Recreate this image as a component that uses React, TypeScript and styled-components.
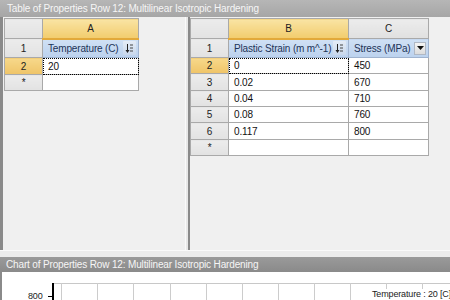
import styled, { createGlobalStyle } from 'styled-components';

const GlobalStyle = createGlobalStyle`
  html, body {
    margin: 0;
    padding: 0;
    background: #f0f0f0;
  }
  body {
    font-family: "Liberation Sans", Tahoma, Arial, sans-serif;
    font-size: 10px;
    letter-spacing: -0.15px;
    color: #1a1a1a;
  }
`;

const Window = styled.div`
  width: 450px;
  height: 300px;
  overflow: hidden;
  background: #f0f0f0;
  display: flex;
  flex-direction: column;
`;

const TitleBar = styled.div<{ $dark?: boolean }>`
  height: ${({ $dark }) => ($dark ? '15px' : '17px')};
  flex: none;
  display: flex;
  align-items: center;
  padding-left: ${({ $dark }) => ($dark ? '6px' : '7px')};
  background: ${({ $dark }) =>
    $dark
      ? 'linear-gradient(#9a9a9a, #8a8a8a)'
      : 'linear-gradient(#b6b6b6, #a6a6a6)'};
  color: #f6f6f6;
  font-size: 10px;
  white-space: nowrap;
  overflow: hidden;
`;

const TablesArea = styled.div`
  height: 233px;
  flex: none;
  display: flex;
`;

const Pane = styled.div<{ $left?: boolean }>`
  width: ${({ $left }) => ($left ? '185px' : 'auto')};
  flex: ${({ $left }) => ($left ? 'none' : '1')};
  border-left: ${({ $left }) => ($left ? '3px solid #8a8a8a' : 'none')};
  padding: 1px 0 0 ${({ $left }) => ($left ? '1px' : '0')};
  box-sizing: border-box;
  background: #f0f0f0;
`;

const VSplitter = styled.div`
  width: 5px;
  flex: none;
  box-sizing: border-box;
  border-left: 1px solid #fbfbfb;
  border-right: 2px solid #8a8a8a;
  background: #e8e8e8;
`;

const HSplitter = styled.div`
  height: 7px;
  flex: none;
  box-sizing: border-box;
  border-top: 1px solid #fafafa;
  background: #ececec;
`;

const Grid = styled.table`
  border-collapse: collapse;
  table-layout: fixed;
  font-size: 10px;
  white-space: nowrap;
`;

const Row = styled.tr<{ $h: number }>`
  height: ${({ $h }) => $h}px;
`;

const RowHead = styled.td<{ $sel?: boolean }>`
  border: 1px solid #a9a9a9;
  background: ${({ $sel }) =>
    $sel ? 'linear-gradient(#f7d88a, #efc468)' : 'linear-gradient(#ececec, #e2e2e2)'};
  text-align: center;
  padding: 0;
  color: #222;
`;

const ColHead = styled.td<{ $sel?: boolean }>`
  border: 1px solid #a9a9a9;
  background: ${({ $sel }) =>
    $sel ? 'linear-gradient(#f9e4a4, #f2cc6c)' : 'linear-gradient(#ececec, #e0e0e0)'};
  border-bottom: ${({ $sel }) => ($sel ? '2px solid #e2a93a' : '1px solid #a9a9a9')};
  text-align: center;
  padding: 0;
  color: #222;
`;

const NameCell = styled.td`
  border: 1px solid #9fb3cf;
  background: linear-gradient(#cfe0f4, #bcd2ee);
  padding: 0 2px 0 5px;
  color: #1d3458;
`;

const NameInner = styled.div`
  display: flex;
  align-items: center;
  justify-content: space-between;
`;

const IconButton = styled.span`
  width: 13px;
  height: 14px;
  flex: none;
  display: flex;
  align-items: center;
  justify-content: center;
  background: linear-gradient(#e4ecf6, #c9d8ec);
  border-radius: 1px;
`;

const DropButton = styled.span`
  width: 12px;
  height: 13px;
  flex: none;
  display: flex;
  align-items: center;
  justify-content: center;
  background: linear-gradient(#f4f4f4, #dcdcdc);
  border: 1px solid #b0b8c4;
  box-sizing: border-box;
`;

const Cell = styled.td<{ $focus?: boolean }>`
  border: 1px solid #a9a9a9;
  background: #fff;
  padding: 0 0 0 5px;
  color: #111;
  outline: ${({ $focus }) => ($focus ? '1px dotted #000' : 'none')};
  outline-offset: -1px;
`;

const ChartArea = styled.div`
  flex: 1;
  background: #fff;
  border-left: 2px solid #8a8a8a;
`;

const SortIcon = () => (
  <svg width="9" height="11" viewBox="0 0 9 11">
    <path d="M2.5 1v8" stroke="#222" strokeWidth="1" />
    <path d="M0.5 7l2 3 2-3z" fill="#222" />
    <path d="M5 2h3M5 5h3M5 8h3" stroke="#444" strokeWidth="1" />
  </svg>
);

const DropIcon = () => (
  <svg width="7" height="4" viewBox="0 0 7 4">
    <path d="M0 0h7L3.5 4z" fill="#111" />
  </svg>
);

const gridX = [61, 97, 133, 170, 206, 242, 278, 314, 350, 386, 422];

const Chart = () => (
  <svg width="448" height="28" viewBox="0 0 448 28" style={{ display: 'block' }}>
    <line x1="50" y1="11.5" x2="448" y2="11.5" stroke="#c8c8c8" />
    {gridX.map((x) => (
      <line key={x} x1={x - 1.5} y1="11" x2={x - 1.5} y2="28" stroke="#cccccc" />
    ))}
    <rect x="50" y="11" width="2" height="17" fill="#000" />
    <line x1="46" y1="24.5" x2="50" y2="24.5" stroke="#000" />
    <text x="26" y="27" fontSize="9" fontFamily="Liberation Sans, Arial, sans-serif" fill="#222">
      800
    </text>
    <rect x="366" y="17" width="82" height="11" fill="#fff" />
    <text x="370" y="25" fontSize="9" fontFamily="Liberation Sans, Arial, sans-serif" fill="#222">
      Temperature : 20 [C]
    </text>
  </svg>
);

const rightRows = [
  { n: '2', b: '0', c: '450', h: 16, sel: true },
  { n: '3', b: '0.02', c: '670', h: 17 },
  { n: '4', b: '0.04', c: '710', h: 16 },
  { n: '5', b: '0.08', c: '760', h: 16 },
  { n: '6', b: '0.117', c: '800', h: 17 },
];

export default function App() {
  return (
    <Window>
      <GlobalStyle />
      <TitleBar>Table of Properties Row 12: Multilinear Isotropic Hardening</TitleBar>
      <TablesArea>
        <Pane $left>
          <Grid>
            <colgroup>
              <col style={{ width: 38 }} />
              <col style={{ width: 96 }} />
            </colgroup>
            <tbody>
              <Row $h={20}>
                <RowHead />
                <ColHead $sel>A</ColHead>
              </Row>
              <Row $h={19}>
                <RowHead>1</RowHead>
                <NameCell>
                  <NameInner>
                    Temperature (C)
                    <IconButton>
                      <SortIcon />
                    </IconButton>
                  </NameInner>
                </NameCell>
              </Row>
              <Row $h={17}>
                <RowHead $sel>2</RowHead>
                <Cell $focus>20</Cell>
              </Row>
              <Row $h={16}>
                <RowHead>*</RowHead>
                <Cell />
              </Row>
            </tbody>
          </Grid>
        </Pane>
        <VSplitter />
        <Pane>
          <Grid>
            <colgroup>
              <col style={{ width: 38 }} />
              <col style={{ width: 120 }} />
              <col style={{ width: 80 }} />
            </colgroup>
            <tbody>
              <Row $h={20}>
                <RowHead />
                <ColHead $sel>B</ColHead>
                <ColHead>C</ColHead>
              </Row>
              <Row $h={19}>
                <RowHead>1</RowHead>
                <NameCell>
                  <NameInner>
                    Plastic Strain (m m^-1)
                    <IconButton>
                      <SortIcon />
                    </IconButton>
                  </NameInner>
                </NameCell>
                <NameCell>
                  <NameInner>
                    Stress (MPa)
                    <DropButton>
                      <DropIcon />
                    </DropButton>
                  </NameInner>
                </NameCell>
              </Row>
              {rightRows.map((r) => (
                <Row key={r.n} $h={r.h}>
                  <RowHead $sel={r.sel}>{r.n}</RowHead>
                  <Cell $focus={r.sel}>{r.b}</Cell>
                  <Cell>{r.c}</Cell>
                </Row>
              ))}
              <Row $h={16}>
                <RowHead>*</RowHead>
                <Cell />
                <Cell />
              </Row>
            </tbody>
          </Grid>
        </Pane>
      </TablesArea>
      <HSplitter />
      <TitleBar $dark>Chart of Properties Row 12: Multilinear Isotropic Hardening</TitleBar>
      <ChartArea>
        <Chart />
      </ChartArea>
    </Window>
  );
}
